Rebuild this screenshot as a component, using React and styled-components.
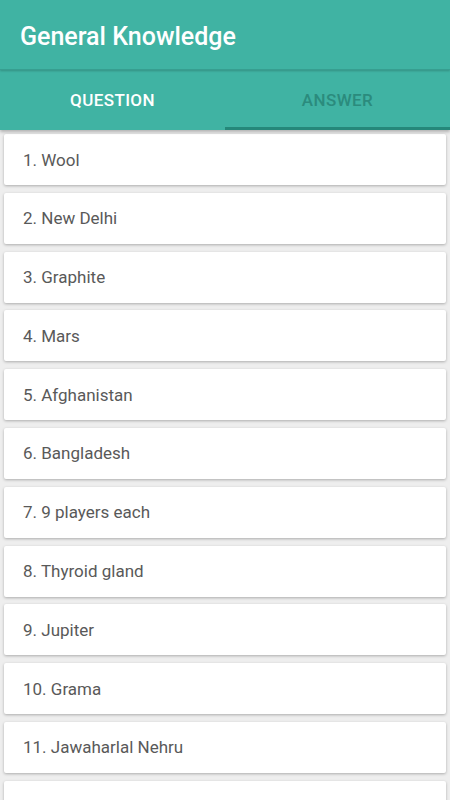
import styled, { createGlobalStyle } from 'styled-components'

const GlobalStyle = createGlobalStyle`
  html, body {
    margin: 0;
    padding: 0;
    background: #eeeeee;
    font-family: Roboto, "Noto Sans", sans-serif;
  }
`

const Screen = styled.div`
  width: 450px;
  height: 800px;
  overflow: hidden;
  background: #eeeeee;
  display: flex;
  flex-direction: column;
`

const Header = styled.header`
  background: #40b3a3;
  box-shadow: 0 2px 3px rgba(0, 0, 0, 0.25);
  position: relative;
  z-index: 2;
`

const Toolbar = styled.div`
  height: 69px;
  display: flex;
  align-items: center;
  padding-left: 20px;
  box-shadow: 0 1px 2px rgba(0, 0, 0, 0.2);
  border-bottom: 1px solid #379e90;

  h1{
    margin: 0;
    color: #ffffff;
    font-size: 25px;
    font-weight: 500;
    padding-top: 4px;
  }
`

const Tabs = styled.div`
  display: flex;
  height: 60px;
`

const Tab = styled.div`
  flex: 1;
  display: flex;
  align-items: center;
  justify-content: center;
  padding-top: 3px;
  font-size: 17px;
  font-weight: 500;
  letter-spacing: 0.4px;
  color: ${p => (p.$active ? '#ffffff' : '#2b8b7d')};
  border-bottom: 3px solid ${p => (p.$selected ? '#25887a' : 'transparent')};
  box-sizing: border-box;
`

const List = styled.div`
  display: flex;
  flex-direction: column;
  gap: 7.8px;
  padding: 4px 4px 0;
`

const Card = styled.div`
  height: 51px;
  flex-shrink: 0;
  background: #ffffff;
  border-radius: 2px;
  box-shadow: 0 1px 3px rgba(0, 0, 0, 0.28);
  display: flex;
  align-items: center;
  padding-left: 19px;
  color: #595959;
  font-size: 17px;
`

const answers = [
  'Wool',
  'New Delhi',
  'Graphite',
  'Mars',
  'Afghanistan',
  'Bangladesh',
  '9 players each',
  'Thyroid gland',
  'Jupiter',
  'Grama',
  'Jawaharlal Nehru',
  'Chandigarh',
]

function App(){
  return(
    <Screen>
      <GlobalStyle />
      <Header>
        <Toolbar>
          <h1>General Knowledge</h1>
        </Toolbar>
        <Tabs>
          <Tab $active>QUESTION</Tab>
          <Tab $selected>ANSWER</Tab>
        </Tabs>
      </Header>
      <List>
        {answers.map((a, i) => (
          <Card key={i}>{i + 1}. {a}</Card>
        ))}
      </List>
    </Screen>
  )
}

export default App
